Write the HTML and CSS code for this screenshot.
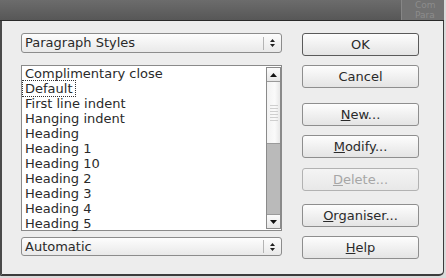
FILE: index.html
```html
<!DOCTYPE html>
<html lang="en">
<head>
  <meta charset="UTF-8" />
  <title>Styles</title>
  <link rel="stylesheet" href="styles.css">
</head>
<body>
  <div class="dialog">
    <!-- Title bar (window behind peeks out on the right) -->
    <div class="titlebar">
      <div class="behind"><span>Com</span><span>Para</span></div>
    </div>

    <div class="content">
      <!-- Left: style family, style list, filter -->
      <div class="left">
        <div class="combo">
          <span class="combo-text">Paragraph Styles</span>
          <span class="combo-spin">
            <svg width="7" height="10" viewBox="0 0 7 10"><path d="M1 4 L3.5 1 L6 4 Z M1 6 L3.5 9 L6 6 Z" fill="#222"/></svg>
          </span>
        </div>

        <div class="list">
          <ul class="items">
            <li>Complimentary close</li>
            <li><span class="focus">Default</span></li>
            <li>First line indent</li>
            <li>Hanging indent</li>
            <li>Heading</li>
            <li>Heading 1</li>
            <li>Heading 10</li>
            <li>Heading 2</li>
            <li>Heading 3</li>
            <li>Heading 4</li>
            <li>Heading 5</li>
          </ul>
          <div class="scrollbar">
            <div class="sb-btn"><svg width="7" height="4" viewBox="0 0 7 4"><path d="M0 4 L3.5 0 L7 4 Z" fill="#111"/></svg></div>
            <div class="sb-thumb"><span class="grip"></span></div>
            <div class="sb-trough"></div>
            <div class="sb-btn"><svg width="7" height="4" viewBox="0 0 7 4"><path d="M0 0 L3.5 4 L7 0 Z" fill="#111"/></svg></div>
          </div>
        </div>

        <div class="combo combo-low">
          <span class="combo-text">Automatic</span>
          <span class="combo-spin">
            <svg width="7" height="10" viewBox="0 0 7 10"><path d="M1 4 L3.5 1 L6 4 Z M1 6 L3.5 9 L6 6 Z" fill="#222"/></svg>
          </span>
        </div>
      </div>

      <!-- Right: action buttons -->
      <div class="right">
        <button class="btn btn-default">OK</button>
        <button class="btn gap-9">Cancel</button>
        <button class="btn gap-15"><u>N</u>ew...</button>
        <button class="btn gap-9"><u>M</u>odify...</button>
        <button class="btn btn-disabled gap-10"><u>D</u>elete...</button>
        <button class="btn gap-13"><u>O</u>rganiser...</button>
        <button class="btn gap-9"><u>H</u>elp</button>
      </div>
    </div>
  </div>
</body>
</html>
```

FILE: styles.css
```css
/* —— Reset & Base —— */
* { box-sizing: border-box; margin: 0; padding: 0; }
body {
  width: 446px;
  height: 278px;
  overflow: hidden;
  background: #dadada;
  font-family: "DejaVu Sans", sans-serif;
  font-size: 13px;
  color: #2a2a2a;
}

/* —— Dialog frame —— */
.dialog {
  width: 444px;
  height: 276px;
  background: #ededed;
  border-left: 2px solid #4a4a4a;
  border-right: 1px solid #3c3c3c;
  border-bottom: 2px solid #3c3c3c;
  border-radius: 0 0 5px 0;
  display: flex;
  flex-direction: column;
}
.titlebar {
  height: 21px;
  margin-left: -2px;
  margin-right: -1px;
  background: linear-gradient(#6c6c6c, #575757);
  border-bottom: 1px solid #2a2a2a;
  position: relative;
}
.behind {
  position: absolute;
  left: 401px;
  top: 0;
  right: 0;
  bottom: 0;
  background: #727272;
  border-left: 1px solid #868686;
  padding-left: 13px;
  display: flex;
  flex-direction: column;
  font-size: 9px;
  line-height: 10px;
  color: #8c8c8c;
  overflow: hidden;
}

/* —— Body layout —— */
.content {
  display: flex;
  gap: 20px;
  padding: 12px 0 0 19px;
}
.left { width: 261px; display: flex; flex-direction: column; }
.right { width: 117px; display: flex; flex-direction: column; }

/* —— Combo boxes —— */
.combo {
  height: 20px;
  border: 1px solid #8c8c8c;
  border-radius: 3px;
  background: linear-gradient(#fdfdfd, #e9e9e9);
  display: flex;
  align-items: center;
  padding-left: 3px;
}
.combo-low { height: 19px; margin-top: 6px; }
.combo-text { flex: 1; line-height: 16px; }
.combo-spin {
  width: 18px;
  height: 13px;
  border-left: 1px solid #b4b4b4;
  display: flex;
  align-items: center;
  justify-content: center;
}

/* —— Style list —— */
.list {
  margin-top: 12px;
  height: 166px;
  border: 1px solid #8a8a8a;
  background: #fff;
  display: flex;
}
.items { flex: 1; list-style: none; padding-left: 3px; }
.items li { height: 15px; line-height: 15px; white-space: nowrap; }
.focus { outline: 1px dotted #333; outline-offset: 0; margin-left: -2px; padding: 0 2px; }

/* —— Scrollbar —— */
.scrollbar {
  width: 15px;
  margin: 1px 0;
  border: 1px solid #8a8a8a;
  display: flex;
  flex-direction: column;
}
.sb-btn {
  height: 14px;
  background: linear-gradient(#fbfbfb, #e6e6e6);
  display: flex;
  align-items: center;
  justify-content: center;
}
.sb-btn:first-child { border-bottom: 1px solid #9a9a9a; }
.sb-btn:last-child { border-top: 1px solid #9a9a9a; }
.sb-thumb {
  height: 62px;
  background: linear-gradient(90deg, #f2f2f2, #fafafa 60%, #e8e8e8);
  border-bottom: 1px solid #9a9a9a;
  display: flex;
  justify-content: center;
  align-items: center;
}
.grip {
  width: 8px;
  height: 16px;
  background: repeating-linear-gradient(#cfcfcf 0 1px, transparent 1px 3px);
}
.sb-trough { flex: 1; background: #bababa; }

/* —— Buttons —— */
.btn {
  height: 23px;
  border: 1px solid #8e8e8e;
  border-radius: 3px;
  background: linear-gradient(#fdfdfd, #e4e4e4);
  font-family: inherit;
  font-size: 13px;
  color: #2a2a2a;
}
.btn-default { border-color: #5a5a5a; }
.btn-disabled { color: #a6a6a6; border-color: #b2b2b2; background: linear-gradient(#f4f4f4, #e8e8e8); }
.gap-9 { margin-top: 9px; }
.gap-10 { margin-top: 10px; }
.gap-13 { margin-top: 13px; }
.gap-15 { margin-top: 15px; }
```
